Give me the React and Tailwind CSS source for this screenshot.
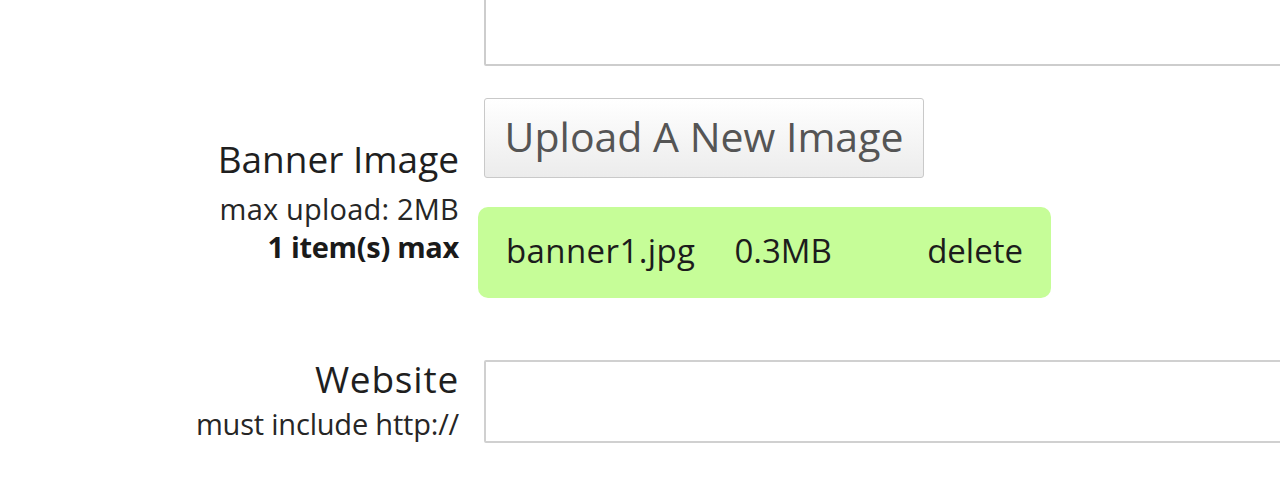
export default function App() {
  const font = { fontFamily: '"Open Sans", "Noto Sans", sans-serif' };
  return (
    <div className="w-[1280px] h-[486px] overflow-hidden bg-white text-[#1f1f1f]" style={font}>
      <div className="grid grid-cols-[459px_1fr] gap-x-[25px]">
        <div />
        <div className="-mt-[40px] h-[106px] border-2 border-[#cdcdcd] rounded-[2px] -mr-[10px]" />

        <div className="flex flex-col items-end text-right pt-[73px] whitespace-nowrap">
          <div className="text-[37px] leading-[40px]">Banner Image</div>
          <div className="text-[29px] leading-[38px] mt-[11px] text-[#262626] tracking-[0.2px]">max upload: 2MB</div>
          <div className="text-[29px] leading-[38px] font-bold text-[#1a1a1a] tracking-[-0.3px]">1 item(s) max</div>
        </div>
        <div className="pt-[32px] flex flex-col items-start">
          <button className="w-[440px] h-[80px] border border-[#c9c9c9] rounded-[3px] bg-gradient-to-b from-white to-[#ececec] text-[#555] text-[41px] leading-none whitespace-nowrap pb-[3px]">
            Upload A New Image
          </button>
          <div className="mt-[29px] -ml-[6px] w-[573px] h-[91px] rounded-[10px] bg-[#c6fd98] flex items-center px-[28px] pb-[4px] text-[33px] leading-none text-[#1c1c1c] whitespace-nowrap">
            <span className="tracking-[0.4px]">banner1.jpg</span>
            <span className="ml-[39px]">0.3MB</span>
            <span className="ml-auto">delete</span>
          </div>
        </div>

        <div className="flex flex-col items-end text-right mt-[62px] -translate-y-[1px] whitespace-nowrap">
          <div className="text-[37px] leading-[40px] tracking-[0.8px]">Website</div>
          <div className="text-[29px] leading-[38px] mt-[6px] text-[#262626] tracking-[-0.2px]">must include http://</div>
        </div>
        <div className="mt-[62px] h-[83px] border-2 border-[#d0d0d0] rounded-[2px] -mr-[10px]" />
      </div>
    </div>
  );
}
